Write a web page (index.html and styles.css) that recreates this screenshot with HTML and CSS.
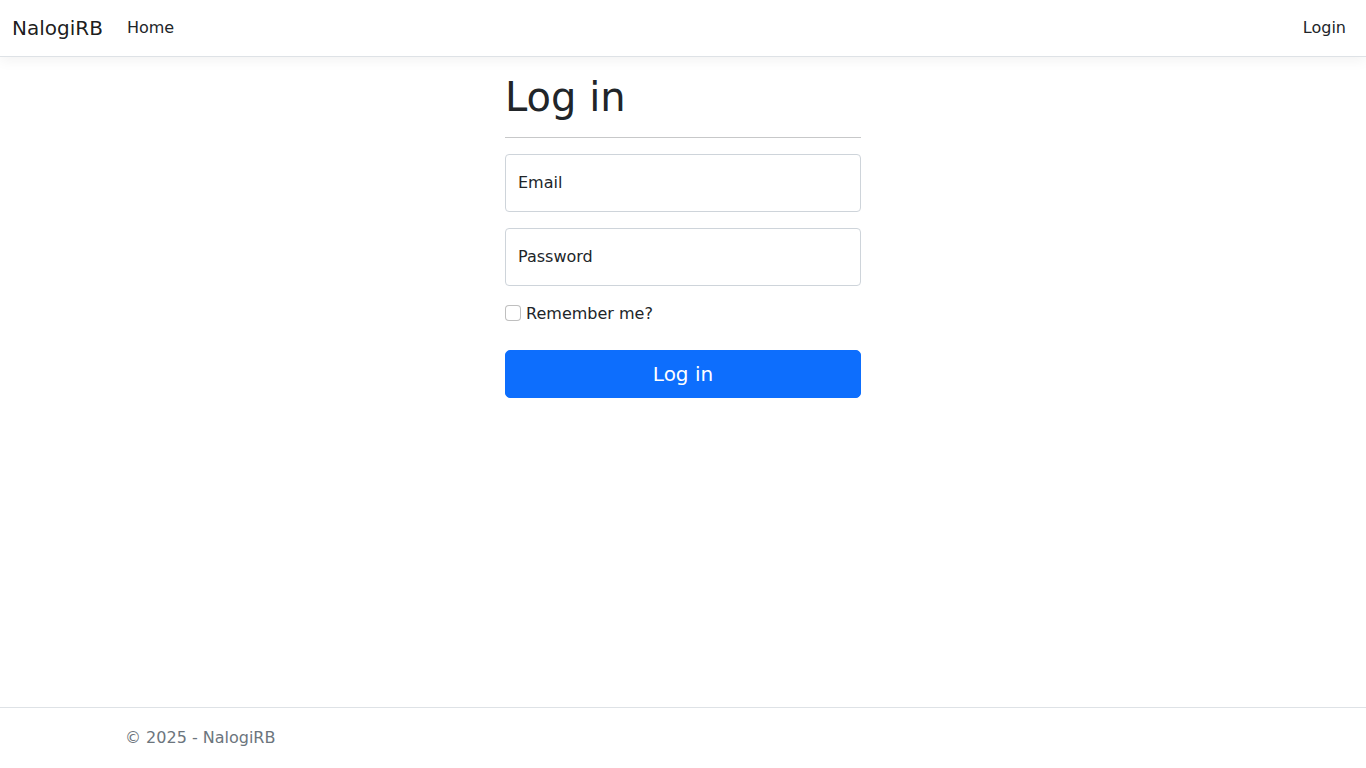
FILE: index.html
```html
<!DOCTYPE html>
<html lang="en">
<head>
    <meta charset="UTF-8">
    <meta name="viewport" content="width=device-width, initial-scale=1.0">
    <title>Log in - NalogiRB</title>
    <link rel="stylesheet" href="styles.css">
</head>
<body>
    <header>
        <nav class="navbar">
            <a class="navbar-brand" href="#">NalogiRB</a>
            <ul class="nav-list">
                <li><a class="nav-link" href="#">Home</a></li>
            </ul>
            <ul class="nav-list nav-right">
                <li><a class="nav-link" href="#">Login</a></li>
            </ul>
        </nav>
    </header>

    <div class="container main">
        <div class="login-col">
            <h1>Log in</h1>
            <hr>
            <form>
                <div class="form-floating">
                    <input type="email" id="email" class="form-control" autocomplete="username">
                    <label for="email">Email</label>
                </div>
                <div class="form-floating">
                    <input type="password" id="password" class="form-control" autocomplete="current-password">
                    <label for="password">Password</label>
                </div>
                <div class="checkbox">
                    <label class="form-label">
                        <input type="checkbox" class="form-check-input">
                        Remember me?
                    </label>
                </div>
                <button type="submit" class="btn-primary">Log in</button>
            </form>
        </div>
    </div>

    <footer class="footer">
        <div class="container">
            &copy; 2025 - NalogiRB
        </div>
    </footer>
</body>
</html>
```

FILE: styles.css
```css
* {
    box-sizing: border-box;
}
html, body {
    height: 100%;
}
body {
    margin: 0;
    font-family: "DejaVu Sans", "Noto Sans", sans-serif;
    font-size: 16px;
    line-height: 1.5;
    color: #212529;
    background: #fff;
    display: flex;
    flex-direction: column;
}
a {
    text-decoration: none;
}
.navbar {
    display: flex;
    align-items: center;
    height: 57px;
    padding: 8px 12px;
    background: #fff;
    border-bottom: 1px solid #dee2e6;
    box-shadow: 0 4px 12px rgba(0, 0, 0, 0.05);
    position: relative;
}
.navbar-brand {
    font-size: 20px;
    line-height: 30px;
    padding: 5px 0;
    margin-right: 16px;
    color: rgba(0, 0, 0, 0.9);
}
.nav-list {
    list-style: none;
    margin: 0;
    padding: 0;
    display: flex;
}
.nav-right {
    margin-left: auto;
}
.nav-link {
    display: block;
    padding: 8px;
    color: #212529;
}
.container {
    width: 1140px;
    margin: 0 auto;
    padding: 0 12px;
}
.main {
    flex: 1;
    padding-top: 16px;
}
.login-col {
    width: 356px;
    margin: 0 auto;
}
h1 {
    font-size: 40px;
    font-weight: 500;
    line-height: 1.2;
    margin: 0;
}
hr {
    margin: 16px 0;
    border: 0;
    border-top: 1px solid #212529;
    opacity: 0.25;
}
form {
    margin: 0;
}
.form-floating {
    position: relative;
    margin-bottom: 16px;
}
.form-control {
    display: block;
    width: 100%;
    height: 58px;
    padding: 16px 12px;
    font: inherit;
    color: #212529;
    border: 1px solid #ced4da;
    border-radius: 4px;
    background: #fff;
}
.form-floating label {
    position: absolute;
    top: 0;
    left: 0;
    padding: 16px 12px;
    border: 1px solid transparent;
    line-height: 24px;
    color: #212529;
    pointer-events: none;
}
.checkbox {
    margin-bottom: 16px;
}
.form-label {
    display: inline-block;
    margin-bottom: 8px;
}
.form-check-input {
    appearance: none;
    width: 16px;
    height: 16px;
    margin: 0;
    vertical-align: -2px;
    border: 1px solid rgba(0, 0, 0, 0.25);
    border-radius: 4px;
    background: #fff;
}
.btn-primary {
    display: block;
    width: 100%;
    height: 48px;
    padding: 8px 16px;
    font: inherit;
    font-size: 20px;
    line-height: 30px;
    color: #fff;
    background: #0d6efd;
    border: 1px solid #0d6efd;
    border-radius: 5px;
    cursor: pointer;
}
.footer {
    border-top: 1px solid #dee2e6;
    line-height: 60px;
    color: #6c757d;
    white-space: nowrap;
}
```
